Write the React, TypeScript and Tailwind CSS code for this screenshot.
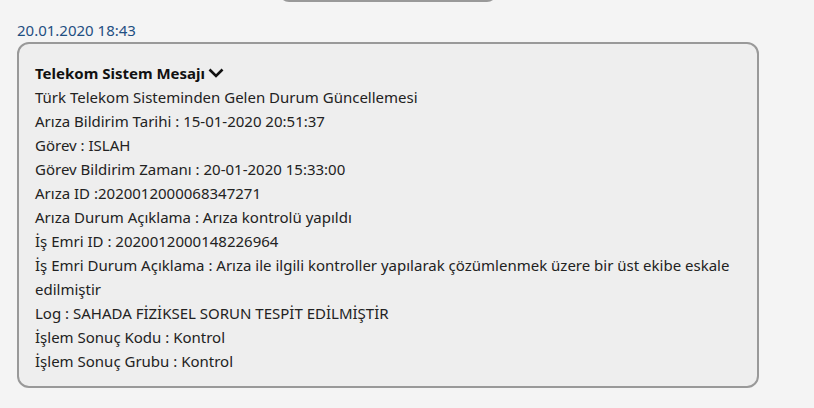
import React from "react";

const lines = [
  "Türk Telekom Sisteminden Gelen Durum Güncellemesi",
  "Arıza Bildirim Tarihi : 15-01-2020 20:51:37",
  "Görev : ISLAH",
  "Görev Bildirim Zamanı : 20-01-2020 15:33:00",
  "Arıza ID :2020012000068347271",
  "Arıza Durum Açıklama : Arıza kontrolü yapıldı",
  "İş Emri ID : 2020012000148226964",
  "İş Emri Durum Açıklama : Arıza ile ilgili kontroller yapılarak çözümlenmek üzere bir üst ekibe eskale edilmiştir",
  "Log : SAHADA FİZİKSEL SORUN TESPİT EDİLMİŞTİR",
  "İşlem Sonuç Kodu : Kontrol",
  "İşlem Sonuç Grubu : Kontrol",
];

export default function App() {
  return (
    <div
      className="w-[814px] h-[408px] bg-[#f4f4f4] overflow-hidden relative"
      style={{ fontFamily: '"Noto Sans", "Open Sans", sans-serif' }}
    >
      <div className="absolute left-[279px] top-[-20px] w-[218px] h-[22px] border-2 border-[#999] rounded-[10px]" />
      <div className="pt-[20px] pl-[17px]">
        <div className="text-[15px] leading-[20px] text-[#1f4f82]">20.01.2020 18:43</div>
        <div className="mt-[2px] w-[742px] border-2 border-[#999] rounded-[12px] bg-[#eeeeee] pl-[16px] pr-[16px] pt-[17px] pb-[13px] text-[15px] leading-[24px] text-[#222]">
          <div className="flex items-center font-bold text-[#111]">
            <span>Telekom Sistem Mesajı</span>
            <svg className="ml-[3px]" width="16" height="12" viewBox="0 0 16 12">
              <path d="M1.5 2.5 L8 9 L14.5 2.5" fill="none" stroke="#111" strokeWidth="2.6" />
            </svg>
          </div>
          {lines.map((l, i) => (
            <div key={i}>{l}</div>
          ))}
        </div>
      </div>
    </div>
  );
}
